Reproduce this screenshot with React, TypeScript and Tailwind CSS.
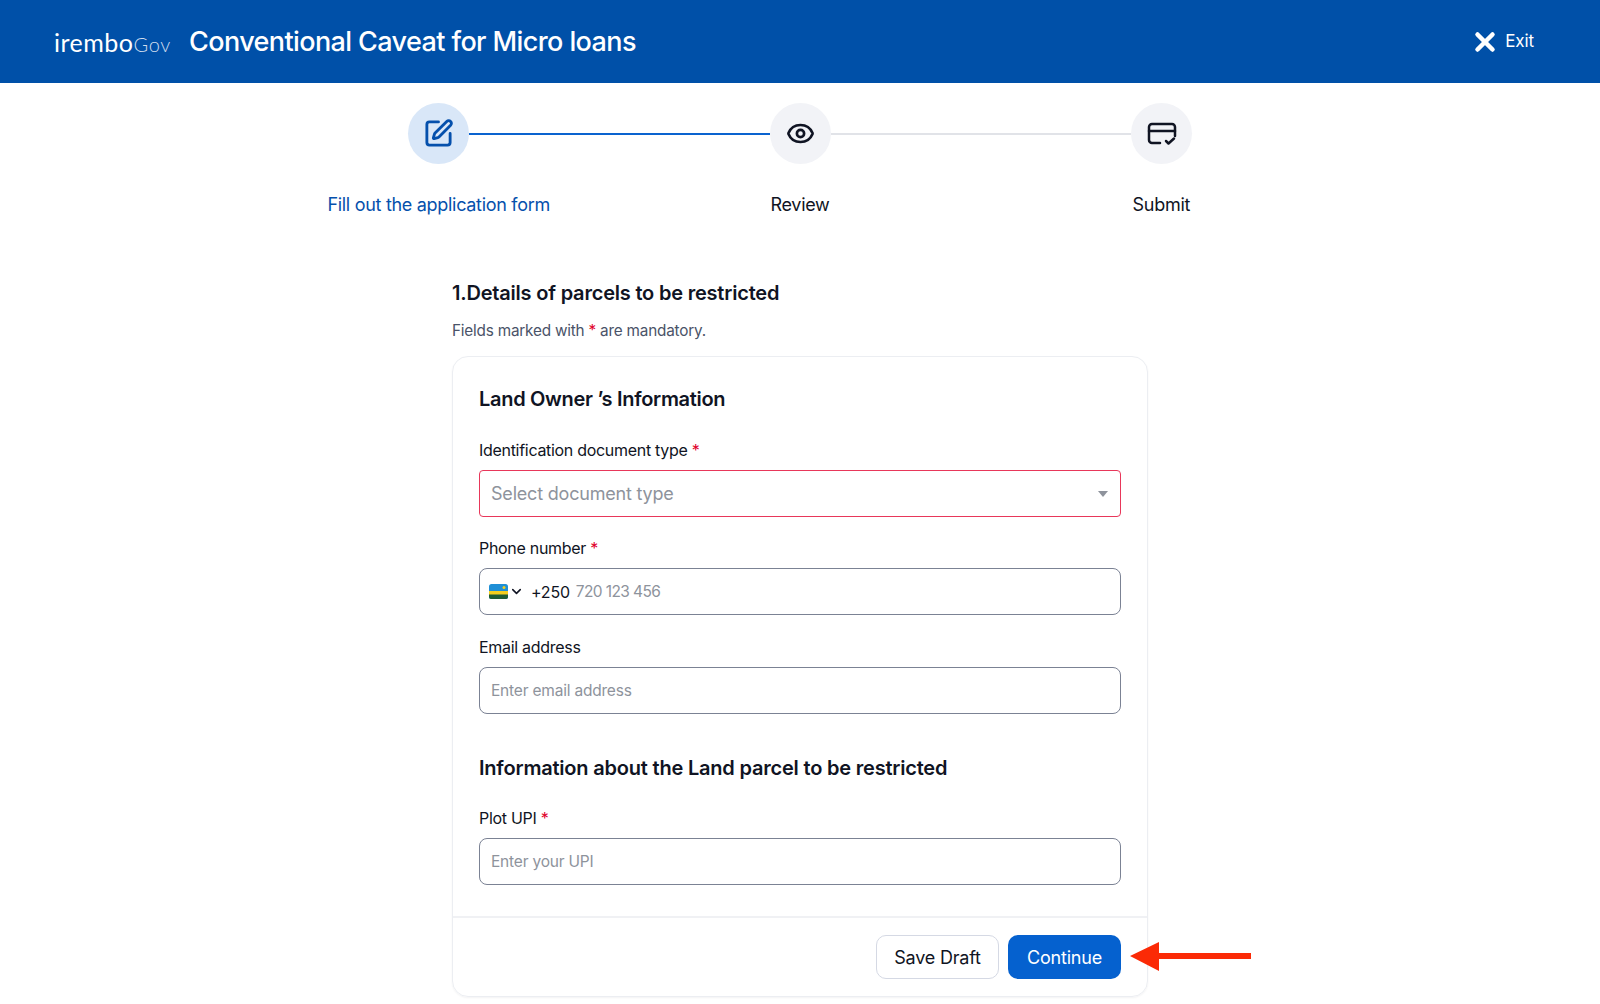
import type { FC } from 'react';
import { ChevronDown, Eye, SquarePen, X } from 'lucide-react';

const Req = () => <span className="text-[#e0002b]"> *</span>;

const Step: FC<{ active?: boolean; children: React.ReactNode }> = ({ active, children }) => (
  <div className={`w-[61px] h-[61px] shrink-0 rounded-full flex items-center justify-center ${active ? 'bg-[#d9e7f8] text-[#0550ac]' : 'bg-[#f2f3f7] text-[#101423]'}`}>
    {children}
  </div>
);

const Label: FC<{ text: string; required?: boolean }> = ({ text, required }) => (
  <div className="h-[20px] leading-[20px] text-[16px] tracking-[-0.3px] text-[#101423] mb-[10px]">
    {text}
    {required && <Req />}
  </div>
);

const TextBox: FC<{ placeholder: string }> = ({ placeholder }) => (
  <div className="h-[47px] rounded-lg border border-[#7b8294] px-[11px] flex items-center text-[15.5px] tracking-[-0.2px] text-[#8e939c]">
    {placeholder}
  </div>
);

const CardCheckIcon = () => (
  <svg width="30" height="26" viewBox="0 0 30 26" fill="none" stroke="currentColor" strokeWidth="2.5" strokeLinecap="round" strokeLinejoin="round">
    <path d="M13 22H5a3 3 0 0 1-3-3V6a3 3 0 0 1 3-3h20a3 3 0 0 1 3 3v9" />
    <path d="M2 10h26" />
    <path d="M19 20l2.500 2.500L27 17.500" />
  </svg>
);

const RwandaFlag = () => (
  <svg width="19" height="15" viewBox="0 0 19 15" className="shrink-0">
    <rect width="19" height="15" rx="2.500" fill="#1f8fd6" />
    <path d="M0 7h19v4H0z" fill="#f4cf1f" />
    <path d="M0 10.500h19V13a2 2 0 0 1-2 2H2a2 2 0 0 1-2-2z" fill="#1f5c35" />
    <circle cx="15" cy="3.500" r="1.500" fill="#f4cf1f" />
  </svg>
);

export default function App() {
  return (
    <div className="relative w-[1600px] h-[1004px] bg-white overflow-hidden font-['Inter',sans-serif]">
      <header className="h-[83px] bg-[#0050a8] flex items-center pl-[54px] pr-[66px] text-white">
        <div className="flex items-baseline w-[135px] pt-[2px]">
          <span className="text-[25px] tracking-[0.5px] font-['Lato',sans-serif]">irembo</span>
          <span className="text-[20px] font-light tracking-[0.6px] text-[#cfdcee] font-['Lato',sans-serif]">Gov</span>
        </div>
        <h1 className="text-[27px] font-medium tracking-[-0.6px] pt-[2px]">Conventional Caveat for Micro loans</h1>
        <div className="ml-auto flex items-center gap-[5px] text-[17px] tracking-[-0.1px]">
          <X size={30} strokeWidth={3.6} />
          Exit
        </div>
      </header>

      <div className="w-[784px] mx-auto mt-[20px] flex items-center">
        <Step active><SquarePen size={31} strokeWidth={2.2} /></Step>
        <div className="flex-1 h-[2px] bg-[#0a63cf]" />
        <Step><Eye size={29} strokeWidth={2.2} /></Step>
        <div className="flex-1 h-[2px] bg-[#e1e3e8]" />
        <Step><CardCheckIcon /></Step>
      </div>
      <div className="w-[1084px] mx-auto mt-[30px] grid grid-cols-3 text-center text-[18px] leading-[22px] tracking-[-0.3px] text-[#101423]">
        <div className="text-[#0550ac]">Fill out the application form</div>
        <div>Review</div>
        <div>Submit</div>
      </div>

      <main className="w-[696px] mx-auto mt-[63px]">
        <h2 className="h-[28px] leading-[28px] text-[20px] font-semibold tracking-[-0.2px] text-[#101423]">1.Details of parcels to be restricted</h2>
        <p className="mt-[14px] h-[20px] leading-[20px] text-[15.3px] tracking-[-0.2px] text-[#4a5368]">Fields marked with<Req /> are mandatory.</p>
        <section className="mt-[15px] h-[641px] rounded-2xl border border-[#eceef2] shadow-[0_1px_2px_rgba(16,20,35,0.05)] flex flex-col">
          <div className="flex-1 px-[26px] pt-[28px]">
            <h3 className="h-[28px] leading-[28px] text-[20px] font-semibold tracking-[-0.3px] text-[#101423]">Land Owner ’s Information</h3>
            <div className="mt-[27px]">
              <Label text="Identification document type" required />
              <div className="h-[47px] rounded-[4px] border border-[#e8375a] pl-[11px] pr-[12px] flex items-center justify-between text-[18px] tracking-[-0.2px] text-[#8e939c]">
                Select document type
                <span className="w-0 h-0 border-x-[5px] border-x-transparent border-t-[6px] border-t-[#8e939c]" />
              </div>
            </div>
            <div className="mt-[21px]">
              <Label text="Phone number" required />
              <div className="h-[47px] rounded-lg border border-[#7b8294] pl-[9px] flex items-center text-[16px] tracking-[-0.2px]">
                <RwandaFlag />
                <ChevronDown size={15} strokeWidth={2.5} className="ml-[1px] text-[#101423]" />
                <span className="ml-[7px] text-[#101423]">+250</span>
                <span className="ml-[6px] text-[15.5px] tracking-[-0.6px] text-[#8e939c]">720 123 456</span>
              </div>
            </div>
            <div className="mt-[22px]">
              <Label text="Email address" />
              <TextBox placeholder="Enter email address" />
            </div>
            <h3 className="mt-[40px] h-[28px] leading-[28px] text-[20px] font-semibold tracking-[-0.2px] text-[#101423]">Information about the Land parcel to be restricted</h3>
            <div className="mt-[26px]">
              <Label text="Plot UPI" required />
              <TextBox placeholder="Enter your UPI" />
            </div>
          </div>
          <footer className="h-[80px] border-t-2 border-[#f0f1f4] px-[26px] flex items-center justify-end gap-[9px] text-[18px] tracking-[-0.2px]">
            <button className="w-[123px] h-[44px] rounded-[10px] border border-[#d5d9e4] text-[#101423]">Save Draft</button>
            <button className="w-[113px] h-[44px] rounded-[10px] bg-[#0561cf] text-white">Continue</button>
          </footer>
        </section>
      </main>

      {/* red annotation arrow */}
      <svg className="absolute left-[1130px] top-[940px]" width="123" height="32" viewBox="0 0 123 32" fill="#fb2a06">
        <path d="M0 16L29 2v11h92v6H29v12z" />
      </svg>
    </div>
  );
}
